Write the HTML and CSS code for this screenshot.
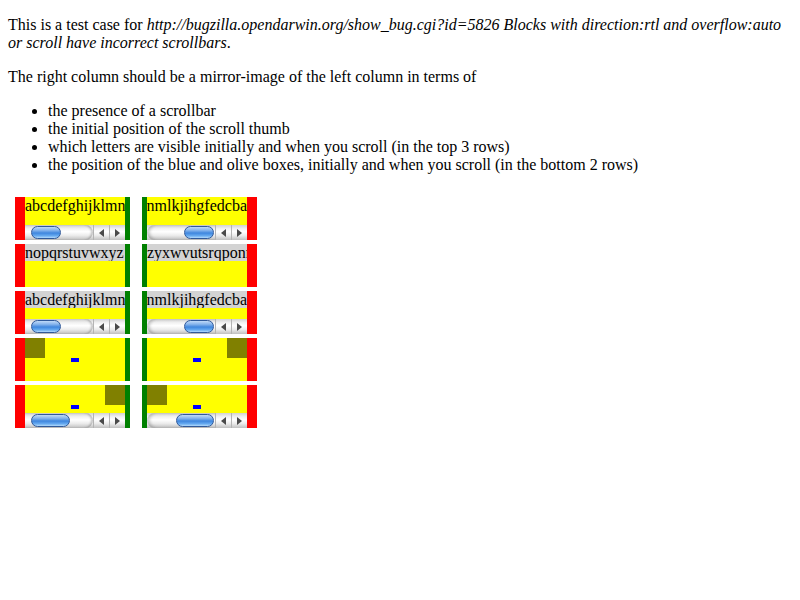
FILE: index.html
```
<!DOCTYPE html>
<html>
<head>
<meta charset="utf-8">
<link rel="stylesheet" href="styles.css">
</head>
<body>
<p class="first">This is a test case for <i>http://bugzilla.opendarwin.org/show_bug.cgi?id=5826 Blocks with direction:rtl and overflow:auto or scroll have incorrect scrollbars</i>.</p>
<p>The right column should be a mirror-image of the left column in terms of</p>
<ul>
<li>the presence of a scrollbar</li>
<li>the initial position of the scroll thumb</li>
<li>which letters are visible initially and when you scroll (in the top 3 rows)</li>
<li>the position of the blue and olive boxes, initially and when you scroll (in the bottom 2 rows)</li>
</ul>
<div class="grid">
  <!-- row 1 -->
  <div class="box ltr">
    <div class="area"><div class="line">abcdefghijklmn</div></div>
    <div class="sb"><div class="track"><div class="thumb t30 start"></div></div><div class="btn"><span class="al"></span></div><div class="btn"><span class="ar"></span></div></div>
  </div>
  <div class="box rtl">
    <div class="area"><div class="line end"><span>nmlkjihgfedcba</span></div></div>
    <div class="sb"><div class="track"><div class="thumb t30 fin"></div></div><div class="btn"><span class="al"></span></div><div class="btn"><span class="ar"></span></div></div>
  </div>
  <!-- row 2 -->
  <div class="box ltr">
    <div class="area"><div class="line grey">nopqrstuvwxyz</div></div>
  </div>
  <div class="box rtl">
    <div class="area"><div class="line grey">zyxwvutsrqponm</div></div>
  </div>
  <!-- row 3 -->
  <div class="box ltr">
    <div class="area"><div class="line grey">abcdefghijklmn</div></div>
    <div class="sb"><div class="track"><div class="thumb t30 start"></div></div><div class="btn"><span class="al"></span></div><div class="btn"><span class="ar"></span></div></div>
  </div>
  <div class="box rtl">
    <div class="area"><div class="line grey end"><span>nmlkjihgfedcba</span></div></div>
    <div class="sb"><div class="track"><div class="thumb t30 fin"></div></div><div class="btn"><span class="al"></span></div><div class="btn"><span class="ar"></span></div></div>
  </div>
  <!-- row 4 -->
  <div class="box ltr">
    <div class="area"><div class="olive"></div><div class="blue"></div></div>
  </div>
  <div class="box rtl">
    <div class="area"><div class="olive right"></div><div class="blue"></div></div>
  </div>
  <!-- row 5 -->
  <div class="box ltr">
    <div class="area"><div class="olive right"></div><div class="blue"></div></div>
    <div class="sb"><div class="track"><div class="thumb t39 start"></div></div><div class="btn"><span class="al"></span></div><div class="btn"><span class="ar"></span></div></div>
  </div>
  <div class="box rtl">
    <div class="area"><div class="olive"></div><div class="blue"></div></div>
    <div class="sb"><div class="track"><div class="thumb t38 fin"></div></div><div class="btn"><span class="al"></span></div><div class="btn"><span class="ar"></span></div></div>
  </div>
</div>
</body>
</html>
```
FILE: styles.css
```
html, body {
  background: #fff;
}
body {
  margin: 0;
  padding: 16px 8px 8px;
  font-family: "Liberation Serif", "Times New Roman", serif;
  font-size: 16px;
  line-height: 18px;
  color: #000;
}
p {
  margin: 16px 0;
}
p.first {
  margin-top: 0;
}
ul {
  margin: 16px 0 23px;
  padding-left: 40px;
}
.grid {
  display: grid;
  grid-template-columns: 115px 115px;
  column-gap: 12px;
  row-gap: 4px;
  margin: 0 0 0 7px;
}
.box {
  width: 100px;
  height: 43px;
  background: #ffff00;
  overflow: hidden;
  display: flex;
  flex-direction: column;
}
.box.ltr {
  border-left: 10px solid #ff0000;
  border-right: 5px solid #008000;
}
.box.rtl {
  border-left: 5px solid #008000;
  border-right: 10px solid #ff0000;
}
.area {
  flex: 1;
  overflow: hidden;
  min-height: 0;
}
.line {
  white-space: nowrap;
  height: 18px;
  line-height: 18px;
  overflow: hidden;
}
.line.end {
  display: flex;
  justify-content: flex-end;
}
.line.end span {
  flex: none;
}
.grey {
  background: #d3d3d3;
  height: 17px;
}
.olive {
  width: 20px;
  height: 20px;
  background: #808000;
}
.olive.right {
  margin-left: auto;
}
.blue {
  width: 8px;
  height: 4px;
  background: #0000ff;
  margin: 0 auto;
}
.sb {
  flex: none;
  height: 15px;
  display: flex;
  background: linear-gradient(#d2d2d2, #f2f2f2 25%, #ffffff 45%, #ebebeb 70%, #c0c0c0);
}
.track {
  flex: 1;
  display: flex;
  align-items: center;
  border-radius: 0 8px 8px 0;
  box-shadow: inset -2px 0 2px rgba(0, 0, 0, 0.2);
}
.rtl .track {
  border-radius: 8px 0 0 8px;
  box-shadow: inset 3px 0 3px rgba(0, 0, 0, 0.18);
}
.thumb {
  height: 13px;
  box-sizing: border-box;
  border: 1px solid #30599a;
  border-radius: 7px;
  background: linear-gradient(#c0daf8, #86b4ec 30%, #3f86de 55%, #66aaf0 80%, #b4dafb);
}
.t30 { width: 30px; }
.t39 { width: 39px; }
.t38 { width: 38px; }
.thumb.start { margin-left: 6px; }
.thumb.fin { margin-left: auto; margin-right: 1px; }
.btn {
  width: 16px;
  flex: none;
  display: flex;
  align-items: center;
  justify-content: center;
  border-left: 1px solid #b4b4b4;
  box-sizing: border-box;
}
.al, .ar {
  width: 0;
  height: 0;
  border-top: 4px solid transparent;
  border-bottom: 4px solid transparent;
}
.al {
  border-right: 5px solid #4a4a4a;
}
.ar {
  border-left: 5px solid #4a4a4a;
}
```
